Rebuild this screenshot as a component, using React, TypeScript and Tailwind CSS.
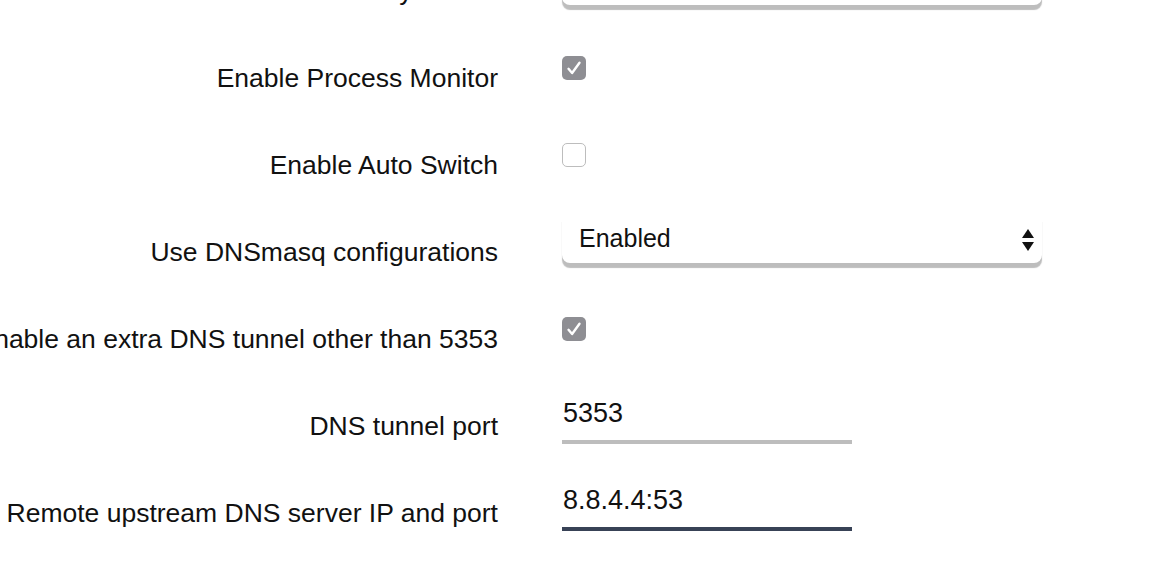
const font = { fontFamily: '"Liberation Sans", Arial, sans-serif' };

const Checkbox = ({ checked }: { checked: boolean }) =>
  checked ? (
    <div className="mt-[21px] w-6 h-6 rounded-[5px] bg-[#8e8e93] flex items-center justify-center">
      <svg width="24" height="24" viewBox="0 0 24 24" fill="none">
        <path d="M6.5 12.8l3.6 4.2L17.5 6.8" stroke="#fff" strokeWidth="2.4" strokeLinecap="round" strokeLinejoin="round" />
      </svg>
    </div>
  ) : (
    <div className="mt-[21px] w-6 h-6 rounded-[5px] bg-white border border-[#bdbdbd]" />
  );

const Select = ({ value, top = "mt-[8px]" }: { value: string; top?: string }) => (
  <div
    className={`${top} w-[480px] h-[46px] bg-white rounded-b-[8px] shadow-[0_5px_1px_#bdbdbd] flex items-start justify-between pl-[17px] pr-[8px] pt-[6px]`}
  >
    <span className="text-[25px] leading-[30px] text-[#111]">{value}</span>
    <svg width="12" height="22" viewBox="0 0 12 22" className="mt-[6px]">
      <path d="M6 0L12 9H0z" fill="#111" />
      <path d="M0 13h12L6 22z" fill="#111" />
    </svg>
  </div>
);

const TextInput = ({ value, active }: { value: string; active?: boolean }) => (
  <div
    className={`mt-[15px] w-[290px] border-b-4 pb-[12px] pl-[1px] text-[27px] leading-[30px] text-[#111] ${
      active ? "border-[#384256]" : "border-[#bdbdbd]"
    }`}
  >
    {value}
  </div>
);

const Row = ({ label, children }: { label: string; children: React.ReactNode }) => (
  <div className="flex items-start h-[87px]">
    <div className="w-[498px] shrink-0 flex justify-end mt-[28px]">
      <span className="whitespace-nowrap text-[26.5px] leading-[30px] text-[#111]">{label}</span>
    </div>
    <div className="ml-[64px]">{children}</div>
  </div>
);

export default function App() {
  return (
    <div className="w-[1164px] h-[562px] bg-white overflow-hidden" style={font}>
      <div className="-mt-[52px]">
        <Row label="UDP Relay Server">
          <Select value="Same as Global Server" top="mt-[11px]" />
        </Row>
        <Row label="Enable Process Monitor">
          <Checkbox checked />
        </Row>
        <Row label="Enable Auto Switch">
          <Checkbox checked={false} />
        </Row>
        <Row label="Use DNSmasq configurations">
          <Select value="Enabled" />
        </Row>
        <Row label="Enable an extra DNS tunnel other than 5353">
          <Checkbox checked />
        </Row>
        <Row label="DNS tunnel port">
          <TextInput value="5353" />
        </Row>
        <Row label="Remote upstream DNS server IP and port">
          <TextInput value="8.8.4.4:53" active />
        </Row>
      </div>
    </div>
  );
}
